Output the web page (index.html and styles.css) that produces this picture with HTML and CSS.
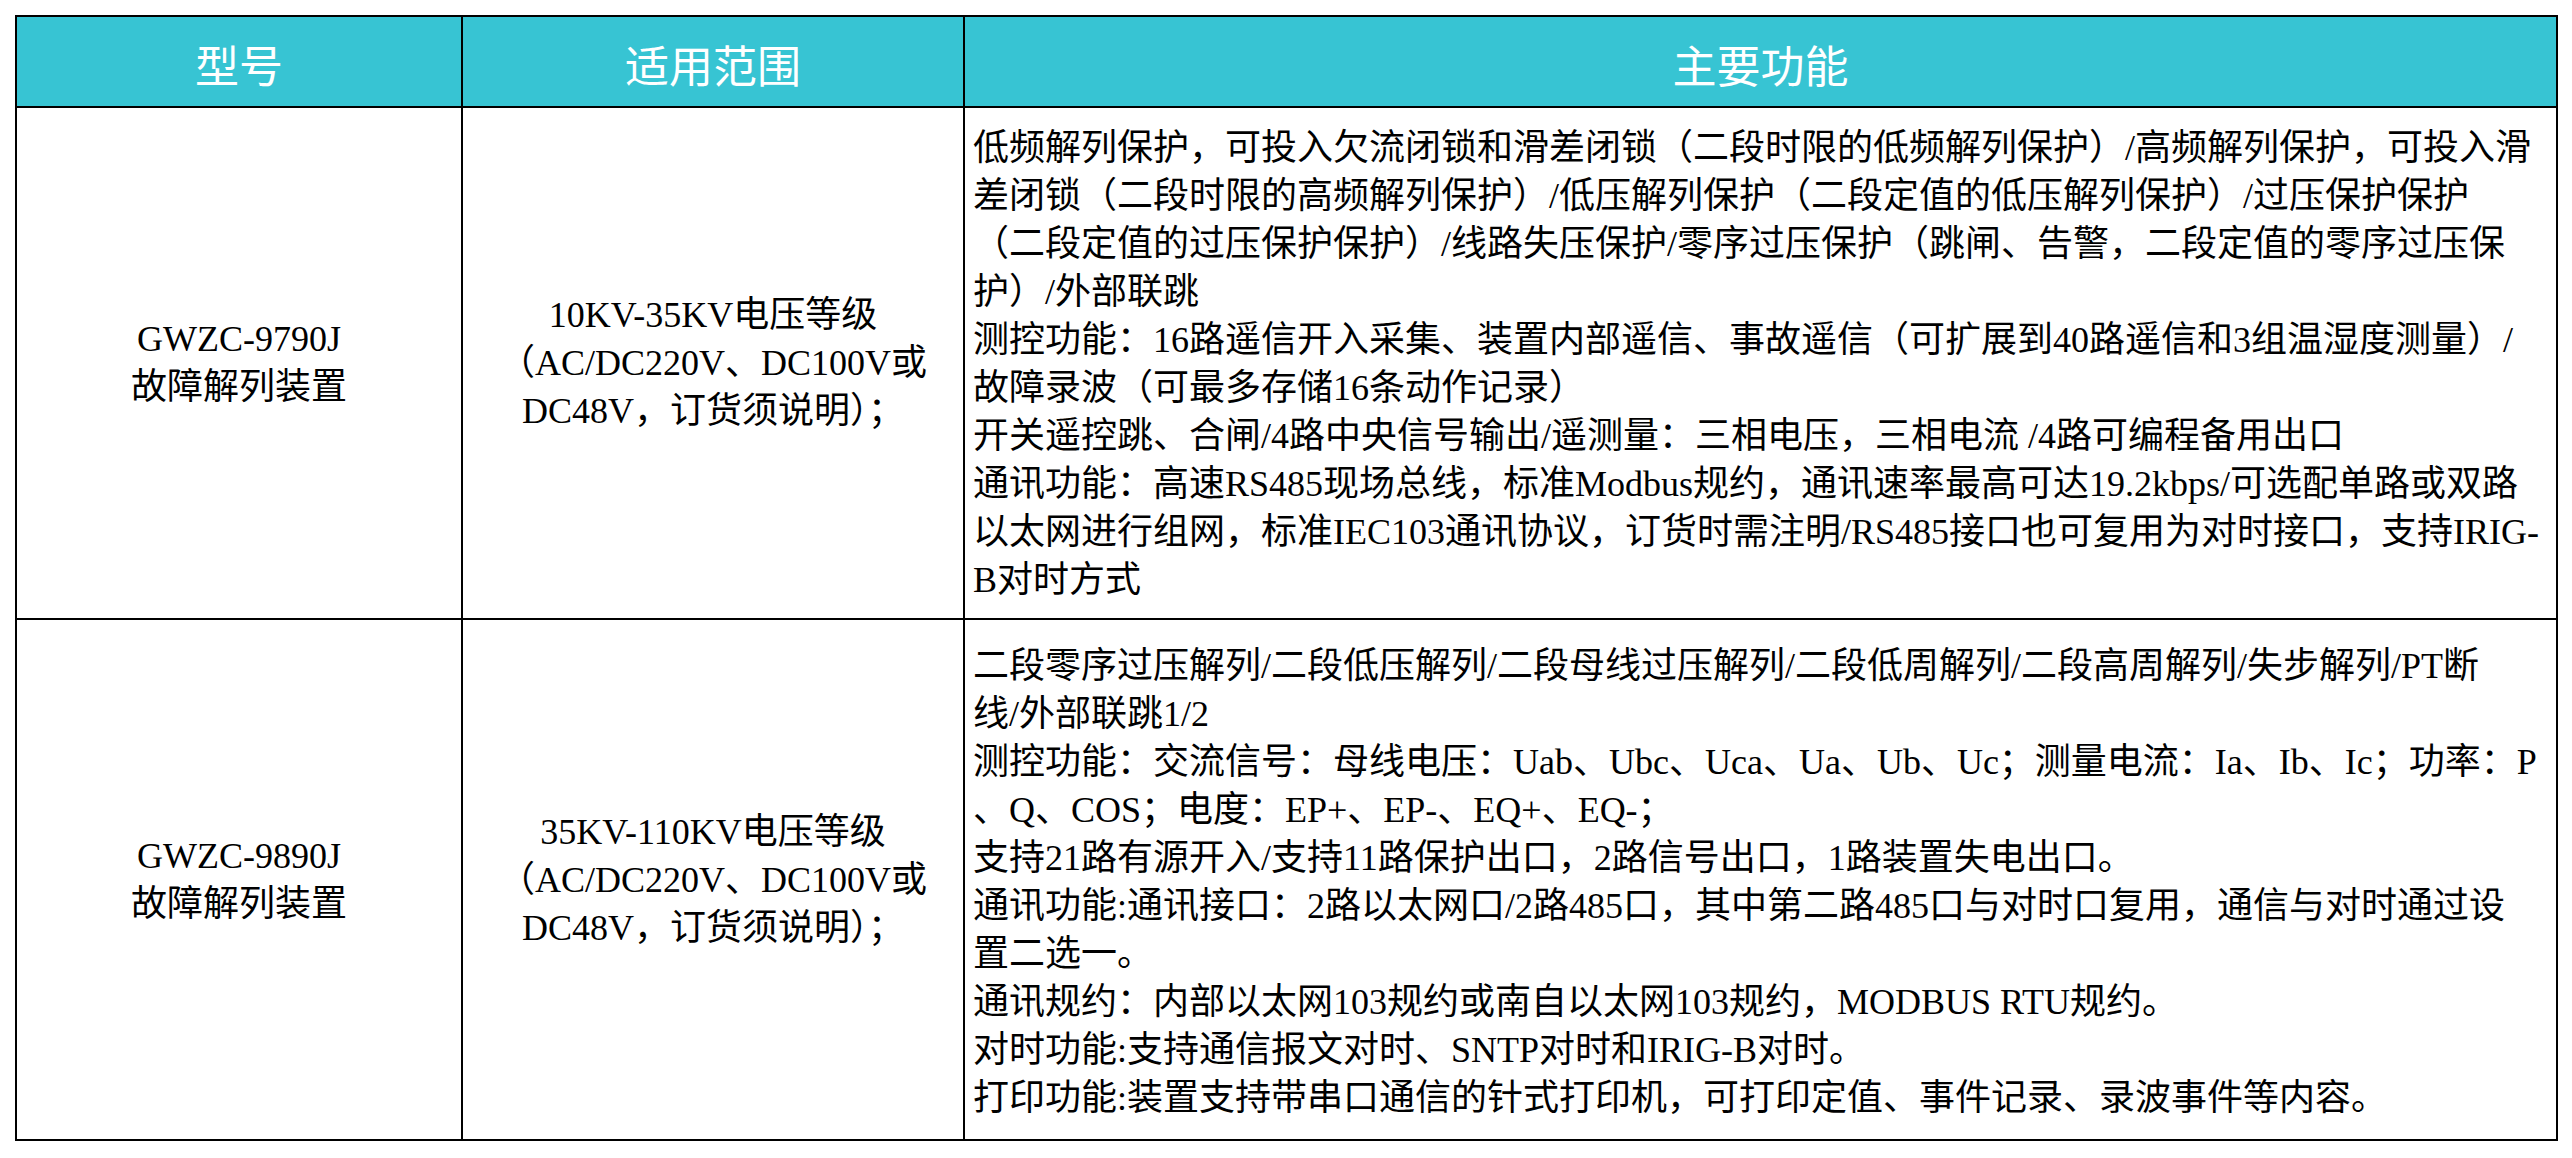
FILE: index.html
```html
<!DOCTYPE html>
<html lang="zh-CN">
<head>
<meta charset="utf-8">
<title>故障解列装置</title>
<link rel="stylesheet" href="styles.css">
</head>
<body>
<table class="spec">
  <colgroup>
    <col class="c-model">
    <col class="c-scope">
    <col class="c-func">
  </colgroup>
  <thead>
    <tr>
      <th>型号</th>
      <th>适用范围</th>
      <th>主要功能</th>
    </tr>
  </thead>
  <tbody>
    <tr class="row1">
      <td class="center">GWZC-9790J<br>故障解列装置</td>
      <td class="center">10KV-35KV电压等级<br>（AC/DC220V、DC100V或<br>DC48V，订货须说明）；</td>
      <td class="func">
        <p>低频解列保护，可投入欠流闭锁和滑差闭锁（二段时限的低频解列保护）/高频解列保护，可投入滑<br>差闭锁（二段时限的高频解列保护）/低压解列保护（二段定值的低压解列保护）/过压保护保护<br>（二段定值的过压保护保护）/线路失压保护/零序过压保护（跳闸、告警，二段定值的零序过压保<br>护）/外部联跳</p>
        <p>测控功能：16路遥信开入采集、装置内部遥信、事故遥信（可扩展到40路遥信和3组温湿度测量）/<br>故障录波（可最多存储16条动作记录）</p>
        <p>开关遥控跳、合闸/4路中央信号输出/遥测量：三相电压，三相电流 /4路可编程备用出口</p>
        <p>通讯功能：高速RS485现场总线，标准Modbus规约，通讯速率最高可达19.2kbps/可选配单路或双路<br>以太网进行组网，标准IEC103通讯协议，订货时需注明/RS485接口也可复用为对时接口，支持IRIG-<br>B对时方式</p>
      </td>
    </tr>
    <tr class="row2">
      <td class="center">GWZC-9890J<br>故障解列装置</td>
      <td class="center">35KV-110KV电压等级<br>（AC/DC220V、DC100V或<br>DC48V，订货须说明）；</td>
      <td class="func">
        <p>二段零序过压解列/二段低压解列/二段母线过压解列/二段低周解列/二段高周解列/失步解列/PT断<br>线/外部联跳1/2</p>
        <p>测控功能：交流信号：母线电压：Uab、Ubc、Uca、Ua、Ub、Uc；测量电流：Ia、Ib、Ic；功率：P<br>、Q、COS；电度：EP+、EP-、EQ+、EQ-；</p>
        <p>支持21路有源开入/支持11路保护出口，2路信号出口，1路装置失电出口。</p>
        <p>通讯功能:通讯接口：2路以太网口/2路485口，其中第二路485口与对时口复用，通信与对时通过设<br>置二选一。</p>
        <p>通讯规约：内部以太网103规约或南自以太网103规约，MODBUS RTU规约。</p>
        <p>对时功能:支持通信报文对时、SNTP对时和IRIG-B对时。</p>
        <p>打印功能:装置支持带串口通信的针式打印机，可打印定值、事件记录、录波事件等内容。</p>
      </td>
    </tr>
  </tbody>
</table>
</body>
</html>
```

FILE: styles.css
```css
html, body {
  margin: 0;
  padding: 0;
  background: #ffffff;
}

body {
  padding: 15px 0 0 15px;
  font-family: "Liberation Serif", "Noto Sans CJK SC", serif;
  color: #000000;
}

.spec {
  border-collapse: collapse;
  table-layout: fixed;
  width: 2541px;
}

.c-model { width: 446px; }
.c-scope { width: 502px; }
.c-func { width: 1593px; }

.spec th,
.spec td {
  border: 2.5px solid #000000;
}

.spec th {
  background: #37c4d3;
  color: #ffffff;
  font-family: "Noto Sans CJK SC", sans-serif;
  font-weight: 400;
  font-size: 44px;
  height: 84px;
  padding: 5px 0 0 0;
  line-height: 1;
  text-align: center;
  vertical-align: middle;
}

.spec td {
  font-size: 36px;
  line-height: 48px;
  vertical-align: middle;
}

.center {
  text-align: center;
  padding: 0 8px;
}

.func {
  text-align: left;
  padding: 16px 8px 14px 8px;
  white-space: nowrap;
}

.row2 .func {
  padding: 22px 8px 17px 8px;
}

.func p {
  margin: 0;
}
```
